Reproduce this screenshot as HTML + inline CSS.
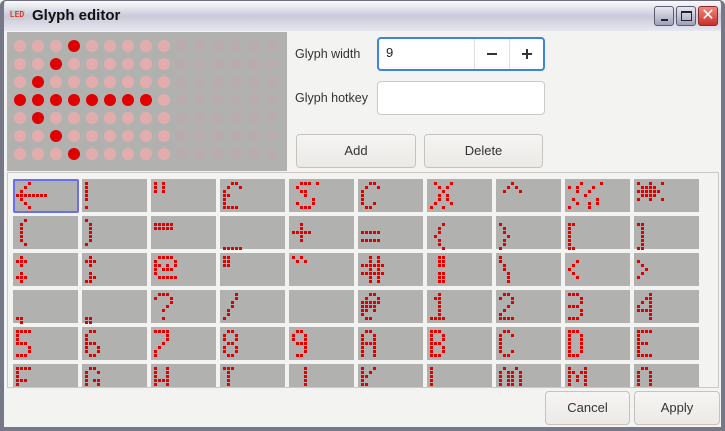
<!DOCTYPE html>
<html><head><meta charset="utf-8"><style>
*{margin:0;padding:0;box-sizing:border-box}
body{width:725px;height:431px;overflow:hidden;background:#f3f4f1;font-family:"Liberation Sans","DejaVu Sans",sans-serif;position:relative}
.abs{position:absolute}
#frame{left:0;top:0;width:725px;height:431px;border:4px solid #767888;border-top:none;border-radius:6px 6px 0 0}
#title{left:0;top:0;width:725px;height:31px;background:linear-gradient(#fbfbfd,#c9cad8 50%,#e6e7ef);border:1px solid #6c6e80;border-bottom:none;border-radius:6px 6px 0 0}
.tt{left:32px;top:7px;font-weight:bold;font-size:15px;color:#111}
.led{left:9px;top:10px;width:16px;height:10px;font-size:8px;color:#d00;background:#ccc;line-height:10px;text-align:center;font-family:"DejaVu Sans Mono",monospace}
.wb{top:6px;width:20px;height:20px;border:1px solid #5a5c70;border-radius:3px;background:linear-gradient(#e8e8f0,#9fa1b8)}
#preview{left:7px;top:32px;width:280px;height:139px;background:#b1b2af}
.lbl{font-size:12.5px;color:#333}
.inp{background:#fff;border:1px solid #cfc9c3;border-radius:4px}
.btn{border:1px solid #c8c2bd;border-radius:4px;background:linear-gradient(#f6f5f3,#ece9e6);font-size:13px;color:#333;text-align:center;line-height:32px}
#grid{left:7px;top:172px;width:712px;height:216px;border:1px solid #cdc8c3;overflow:hidden;background:#f3f4f1}
.cell{position:absolute;width:65px;height:33px;background:#b1b2af}
.dot{position:absolute;width:3px;height:3px;background:#e00000}
</style></head><body>
<div id="title" class="abs"></div>
<div class="abs led">LED</div>
<div class="abs tt">Glyph editor</div>
<div class="abs wb" style="left:654px"><div class="abs" style="left:6px;top:12px;width:7px;height:2px;background:#223"></div></div>
<div class="abs wb" style="left:676px"><div class="abs" style="left:4px;top:4px;width:11px;height:10px;border:1.5px solid #223;border-top-width:2px"></div></div>
<div class="abs wb" style="left:698px;background:linear-gradient(#f08a80,#c8302a);border-color:#8a2a2a;color:#fff;font-size:16px;line-height:18px;text-align:center">✕</div>
<div id="frame" class="abs"></div>

<svg id="preview" class="abs" width="280" height="139"></svg>

<div class="abs lbl" style="left:295px;top:47px">Glyph width</div>
<div class="abs inp" style="left:377px;top:37px;width:168px;height:34px;border:2px solid #3c84e0"></div>
<div class="abs" style="left:386px;top:45px;font-size:13px;color:#222">9</div>
<div class="abs" style="left:474px;top:39px;width:1px;height:30px;background:#e4e0dc"></div>
<div class="abs" style="left:509px;top:39px;width:1px;height:30px;background:#e4e0dc"></div>
<div class="abs" style="left:487px;top:53px;width:10px;height:2px;background:#333"></div>
<div class="abs" style="left:522px;top:53px;width:10px;height:2px;background:#333"></div>
<div class="abs" style="left:526px;top:49px;width:2px;height:10px;background:#333"></div>

<div class="abs lbl" style="left:295px;top:91px">Glyph hotkey</div>
<div class="abs inp" style="left:377px;top:81px;width:168px;height:34px"></div>

<div class="abs btn" style="left:296px;top:134px;width:120px;height:34px">Add</div>
<div class="abs btn" style="left:424px;top:134px;width:119px;height:34px">Delete</div>

<div id="grid" class="abs"></div>

<div class="abs btn" style="left:545px;top:391px;width:85px;height:34px">Cancel</div>
<div class="abs btn" style="left:634px;top:391px;width:86px;height:34px">Apply</div>

<script>
// preview
var sv=document.getElementById('preview'),h='';
var lit={'0,3':1,'1,2':1,'2,1':1,'3,0':1,'3,1':1,'3,2':1,'3,3':1,'3,4':1,'3,5':1,'3,6':1,'3,7':1,'4,1':1,'5,2':1,'6,3':1};
for(var r=0;r<7;r++)for(var c=0;c<15;c++){var col=lit[r+','+c]?'#e00000':(c<9?'#e3adad':'#b9acad');
h+='<circle cx="'+(13+18*c)+'" cy="'+(14+18*r)+'" r="6" fill="'+col+'"/>';}
sv.innerHTML=h;
var G=[
["...X....|..X.....|.X......|XXXXXXXX|.X......|..X.....|...X....","X|X|X|X|X|.|X","X.X|X.X|X.X","..XX.|.X..X|X....|XX...|X....|X....|XXXX.","..XXX.X|.X.....|..XX...|...X...|.....X.|.X...X.|..XXX..","..XX.|.X..X|X....|X....|X....|X..X.|.XX..",".X...X|..X.X.|...X..|..X.X.|..X.X.|.X...X|X..X..","...X...|..X.X..|.X...X.","...X....X|X.X...X..|..X..X...|....X....|.X.....X.|..X..X.X.|X....X...","X..X..X|.XXXX..|XXXXXX.|.XXXX..|X..X..X"],
["..X|.X.|.X.|.X.|.X.|.X.|..X","X..|.X.|.X.|.X.|.X.|.X.|X..","|XXXXX|XXXXX","|||||||XXXXX","|..X..|..X..|XXXXX|..X..|..X..","|||XXXXX||XXXXX","|...X|..X.|..X.|.X..|..X.|..X.|...X","|X...|.X..|.X..|..X.|.X..|.X..|X...","|XX|X.|X.|X.|X.|X.|XX","|XX|.X|.X|.X|.X|.X|XX"],
[".X.|XXX|.X.||.X.|XXX|.X.",".X.|XXX|.X.||.X.|.XX|XX.",".XXXX.|X....X|XX.X.X|X.XXX.|X.....|.XXXXX","XX|XX|XX","X.X.|.X.X","..X.X.|..X.X.|XXXXXX|..X.X.|XXXXXX|..X.X.|..X.X.","..XX|..XX|..XX||..XX|..XX|..XX","X...|X...|.X..|.X..|..X.|..X.|..X.","|..X|.X.|X..|.X.|..X","|X..|.X.|..X|.X.|X.."],
["||||||XX|.X","||||||XX|XX",".XXX.|X...X|....X|...X.|..X..||..X..","...X|...X|..X.|..X.|.X..|.X..|X...","","..XX.|.X..X|XXXXX|XXXX.|XX.X.|X....|.XX..","..X|.XX|..X|..X|..X|..X|XXXX",".XX.|X..X|...X|..X.|.X..|X...|XXXX","XXX.|...X|...X|XXX.|...X|...X|XXX.","...X|..XX|.X.X|X..X|XXXX|...X|...X"],
["XXXX|X...|X...|XXX.|...X|...X|XXX.",".XX.|X...|X...|XXX.|X..X|X..X|.XX.","XXXX|...X|...X|..X.|.X..|X...|X...",".XX.|X..X|X..X|.XX.|X..X|X..X|.XX.",".XX.|X..X|X..X|.XXX|...X|...X|.XX.",".XX.|X..X|X..X|XXXX|X..X|X..X|X..X","XXX.|X..X|X..X|XXX.|X..X|X..X|XXX.",".XX.|X..X|X...|X...|X...|X..X|.XX.","XXX.|X..X|X..X|X..X|X..X|X..X|XXX.","XXXX|X...|X...|XXX.|X...|X...|XXXX"],
["XXXX|X...|X...|XXX.|X...|X...|X...",".XX.|X..X|X...|X.XX|X..X|X..X|.XX.","X..X|X..X|X..X|XXXX|X..X|X..X|X..X","XXX|.X.|.X.|.X.|.X.|.X.|XXX","...X|...X|...X|...X|...X|X..X|.XX.","X..X|X.X.|XX..|X...|XX..|X.X.|X..X","X|X|X|X|X|X|XXXX",".X..X.|X.XX.X|X.XX.X|X.XX.X|X.XX.X","X...X|XX.XX|X.X.X|X.X.X|X...X",".XX.|X..X|X..X|X..X|X..X"]];
var g=document.getElementById('grid'),s='';
for(var r=0;r<6;r++)for(var c=0;c<10;c++){
 var x=5+69*c,y=6+37*r;
 s+='<div class="cell" style="left:'+x+'px;top:'+y+'px">';
 var rows=(G[r][c]||'').split('|');
 for(var i=0;i<rows.length;i++)for(var j=0;j<rows[i].length;j++)if(rows[i][j]=='X')
  s+='<div class="dot" style="left:'+(3+4*j)+'px;top:'+(3+4*i)+'px"></div>';
 s+='</div>';}
s+='<div style="position:absolute;left:5px;top:6px;width:66px;height:34px;border:2px solid #6a6ee8;border-radius:2px"></div>';
g.innerHTML=s;
</script>
</body></html>
